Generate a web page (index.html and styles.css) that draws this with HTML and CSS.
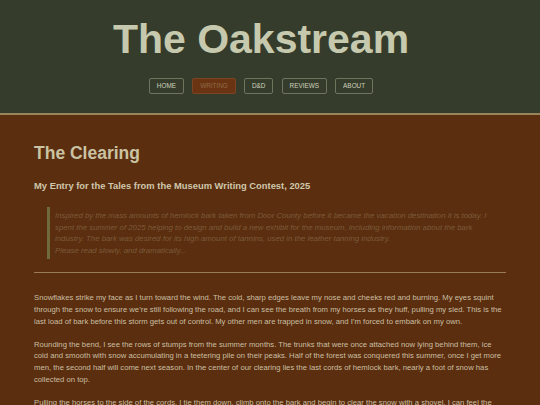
FILE: index.html
```html
<!DOCTYPE html>
<html lang="en">
<head>
<meta charset="utf-8">
<title>The Oakstream</title>
<link rel="stylesheet" href="styles.css">
</head>
<body>
<header class="site-header">
  <h1 class="site-title">The Oakstream</h1>
  <nav class="nav">
    <a class="nav-btn" href="#">HOME</a>
    <a class="nav-btn active" href="#">WRITING</a>
    <a class="nav-btn" href="#">D&amp;D</a>
    <a class="nav-btn" href="#">REVIEWS</a>
    <a class="nav-btn" href="#">ABOUT</a>
  </nav>
</header>
<main class="content">
  <h2 class="story-title">The Clearing</h2>
  <h3 class="story-sub">My Entry for the Tales from the Museum Writing Contest, 2025</h3>
  <blockquote class="note">Inspired by the mass amounts of hemlock bark taken from Door County before it became the vacation destination it is today. I spent the summer of 2025 helping to design and build a new exhibit for the museum, including information about the bark industry. The bark was desired for its high amount of tannins, used in the leather tanning industry.<br>Please read slowly, and dramatically...</blockquote>
  <hr class="rule">
  <p class="para">Snowflakes strike my face as I turn toward the wind. The cold, sharp edges leave my nose and cheeks red and burning. My eyes squint through the snow to ensure we’re still following the road, and I can see the breath from my horses as they huff, pulling my sled. This is the last load of bark before this storm gets out of control. My other men are trapped in snow, and I’m forced to embark on my own.</p>
  <p class="para">Rounding the bend, I see the rows of stumps from the summer months. The trunks that were once attached now lying behind them, ice cold and smooth with snow accumulating in a teetering pile on their peaks. Half of the forest was conquered this summer, once I get more men, the second half will come next season. In the center of our clearing lies the last cords of hemlock bark, nearly a foot of snow has collected on top.</p>
  <p class="para">Pulling the horses to the side of the cords, I tie them down, climb onto the bark and begin to clear the snow with a shovel. I can feel the weight of each scoop in my shoulders as the wind howls through the empty clearing.</p>
</main>
</body>
</html>
```
FILE: styles.css
```css
html, body {
  margin: 0;
  padding: 0;
}
body {
  background: #5a2e0f;
  font-family: "Liberation Sans", Arial, sans-serif;
}
.site-header {
  background: #353c2c;
  border-bottom: 2px solid #98835b;
  padding: 14px 18px 19px 0;
  display: flex;
  flex-direction: column;
  align-items: center;
}
.site-title {
  margin: 0;
  font-size: 41px;
  line-height: 50px;
  font-weight: bold;
  color: #c6c9ad;
}
.nav {
  margin-top: 14px;
  display: flex;
  gap: 8.5px;
}
.nav-btn {
  display: block;
  font-size: 6.4px;
  line-height: 8px;
  padding: 3px 6.8px;
  border: 1px solid #6f745f;
  border-radius: 2px;
  color: #cfd2bd;
  text-decoration: none;
}
.nav-btn.active {
  background: #6a3312;
  border-color: #7a4322;
  color: #8e6b47;
}
.content {
  padding: 28px 34px 0;
}
.story-title {
  margin: 0;
  font-size: 17.5px;
  line-height: 21px;
  font-weight: bold;
  color: #cac3a3;
}
.story-sub {
  margin: 16px 0 0;
  font-size: 9.4px;
  line-height: 11.3px;
  font-weight: bold;
  color: #cfc7ab;
}
.note {
  margin: 15.7px 16px 0 13px;
  padding: 3px 0 3px 5px;
  border-left: 3px solid #6e6a3a;
  font-style: italic;
  font-size: 7.8px;
  line-height: 11.6px;
  color: #7c5b3b;
}
.rule {
  margin: 13px 0 0;
  border: 0;
  height: 1px;
  background: #9a7d55;
}
.para {
  margin: 19px 0 0;
  font-size: 7.7px;
  line-height: 11.6px;
  color: #cbbfa2;
}
.para + .para {
  margin-top: 11.7px;
}
```
